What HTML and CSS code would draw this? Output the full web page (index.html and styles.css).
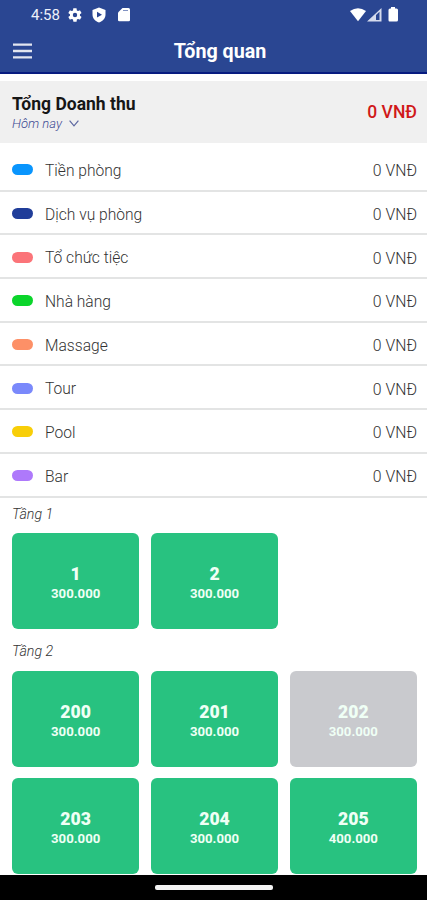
FILE: index.html
```html
<!DOCTYPE html>
<html lang="vi">
<head>
<meta charset="utf-8">
<title>Tổng quan</title>
<link rel="stylesheet" href="styles.css">
</head>
<body>
<div class="screen">
  <header class="header">
    <div class="status">
      <span class="time">4:58</span>
      <svg class="gear" width="16" height="16" viewBox="0 0 24 24"><path fill="#fff" fill-rule="evenodd" d="M19.4 13a7.500 7.500 0 0 0 0-2l2.100-1.600c.2-.2.3-.4.1-.7l-2-3.400c-.1-.3-.4-.3-.6-.2l-2.500 1a7.300 7.300 0 0 0-1.700-1l-.4-2.600c0-.3-.2-.5-.5-.5h-4c-.3 0-.5.2-.5.4L9 5.100c-.6.3-1.200.6-1.700 1l-2.500-1c-.2-.1-.5 0-.6.2l-2 3.400c-.1.300-.1.500.1.700L4.500 11a7.500 7.500 0 0 0 0 2l-2.200 1.600c-.2.200-.2.400-.1.700l2 3.400c.1.300.4.300.6.200l2.500-1c.5.400 1.100.700 1.700 1l.4 2.600c0 .3.200.5.500.5h4c.3 0 .5-.2.500-.4l.4-2.700c.6-.3 1.200-.6 1.700-1l2.500 1c.2.100.5 0 .6-.2l2-3.400c.1-.3.100-.5-.1-.7zM12 15.300a3.300 3.300 0 1 1 0-6.600 3.300 3.300 0 0 1 0 6.600z"/></svg>
      <svg class="shield" width="14" height="16" viewBox="0 0 14 16"><path fill="#fff" fill-rule="evenodd" d="M7 .5 13.500 3v4.500c0 4-2.800 6.800-6.500 8-3.700-1.200-6.500-4-6.500-8V3zM5 4.800v5.800l5-2.900z"/></svg>
      <svg class="card-icon" width="12" height="15" viewBox="0 0 12 15"><path fill="#fff" d="M4.500 1H10.500Q12 1 12 2.500V13Q12 14.300 10.700 14.300H1.300Q0 14.300 0 13V5.500z"/><path stroke="#8293c3" d="M5 3.500h5"/></svg>
      <svg class="signals" width="50" height="16" viewBox="0 0 50 16"><path fill="#fff" d="M0 4Q8-1.500 16 4L8 14.300z"/><path fill="#d5dbed" fill-rule="evenodd" d="M17 14.500 31.500 1v13.500zM26 8v5h3.500V4.800z"/><path fill="#fff" d="M41 1.500V0h4v1.500h1.500Q48 1.500 48 3v10q0 1.500-1.500 1.500h-7Q38.500 14.500 38.500 13V3Q38.500 1.500 40 1.500z"/></svg>
    </div>
    <div class="toolbar">
      <svg class="menu" width="19" height="16" viewBox="0 0 19 16"><path stroke="#e2e5f0" stroke-width="2.300" d="M0 1.700h19M0 8h19M0 14.300h19"/></svg>
      <h1>Tổng quan</h1>
    </div>
  </header>
  <section class="summary">
    <div>
      <h2>Tổng Doanh thu</h2>
      <div class="period"><span>Hôm nay</span><svg width="10" height="7" viewBox="0 0 10 7"><path fill="none" stroke="#5c67a0" stroke-width="1.200" d="M.6.7 5 5.800 9.400.7"/></svg></div>
    </div>
    <strong>0 VNĐ</strong>
  </section>
  <ul class="revenue">
    <li><i class="pill blue"></i><span>Tiền phòng</span><b>0 VNĐ</b></li>
    <li><i class="pill navy"></i><span>Dịch vụ phòng</span><b>0 VNĐ</b></li>
    <li><i class="pill red"></i><span>Tổ chức tiệc</span><b>0 VNĐ</b></li>
    <li><i class="pill green"></i><span>Nhà hàng</span><b>0 VNĐ</b></li>
    <li><i class="pill orange"></i><span>Massage</span><b>0 VNĐ</b></li>
    <li><i class="pill indigo"></i><span>Tour</span><b>0 VNĐ</b></li>
    <li><i class="pill yellow"></i><span>Pool</span><b>0 VNĐ</b></li>
    <li><i class="pill purple"></i><span>Bar</span><b>0 VNĐ</b></li>
  </ul>
  <main class="floors">
    <h3>Tầng 1</h3>
    <div class="rooms">
      <div class="room"><b>1</b><span>300.000</span></div>
      <div class="room"><b>2</b><span>300.000</span></div>
    </div>
    <h3>Tầng 2</h3>
    <div class="rooms">
      <div class="room"><b>200</b><span>300.000</span></div>
      <div class="room"><b>201</b><span>300.000</span></div>
      <div class="room off"><b>202</b><span>300.000</span></div>
      <div class="room"><b>203</b><span>300.000</span></div>
      <div class="room"><b>204</b><span>300.000</span></div>
      <div class="room"><b>205</b><span>400.000</span></div>
    </div>
  </main>
  <footer class="navbar"><i></i></footer>
</div>
</body>
</html>
```
FILE: styles.css
```css
* { box-sizing: border-box; margin: 0; padding: 0; }
body { font-family: Roboto, sans-serif; background: #fff; color: #333; }
.screen { width: 427px; height: 900px; display: flex; flex-direction: column; overflow: hidden; }
.header { height: 74px; flex: none; background: #2a4692; border-bottom: 2px solid #071b80; color: #fff; }
.status { height: 29px; display: flex; align-items: center; padding: 0 27px 0 31px; }
.time { font-size: 15px; width: 36px; white-space: nowrap; color: #eef1fa; }
.shield { margin-left: 9px; }
.card-icon { margin-left: 12px; }
.signals { margin-left: auto; }
.toolbar { height: 44px; display: grid; grid-template-columns: 40px 1fr 27px; align-items: center; }
.menu { margin-left: 13px; }
h1 { font-size: 19.700px; font-weight: 700; text-align: center; line-height: 24px; padding-top: 2px; }
.summary { height: 62px; flex: none; margin-top: 6.500px; background: #f0f0f0; padding: 2px 10px 0 12px; display: flex; align-items: center; justify-content: space-between; }
h2 { font-size: 17.500px; line-height: 22px; font-weight: 700; color: #161616; }
.period { display: flex; align-items: center; gap: 7px; font-size: 13px; line-height: 18px; font-style: italic; font-weight: 300; color: #3d4a92; }
.summary strong { font-size: 17.500px; font-weight: 500; color: #d01919; padding-bottom: 1px; }
.revenue { list-style: none; padding-top: 5.500px; flex: none; }
.revenue li { height: 43.700px; display: flex; align-items: center; padding: 2px 10px 0 12px; border-bottom: 2px solid #e3e4e4; font-size: 15.600px; font-weight: 300; }
.revenue span, .revenue b { padding-top: 2px; }
.revenue b { margin-left: auto; font-weight: 300; font-size: 15.800px; }
.pill { width: 21px; height: 11px; border-radius: 5.500px; margin-right: 12px; }
.blue { background: #0995fd; }
.navy { background: #203d99; }
.red { background: #fb7479; }
.green { background: #0bd52b; }
.orange { background: #fd9067; }
.indigo { background: #7a89fb; }
.yellow { background: #f8ce08; }
.purple { background: #ae79fb; }
.floors { padding: 0 10px 0 12px; flex: none; }
h3 { height: 31px; margin-top: 4.700px; padding-top: 2.500px; font-size: 14.200px; line-height: 19px; font-weight: 300; font-style: italic; }
.rooms { display: grid; grid-template-columns: repeat(3, 1fr); gap: 11.500px; }
.rooms + h3 { margin-top: 11px; padding-top: 2px; }
.room { height: 95.700px; border-radius: 6px; background: #28c280; color: #effff5; display: flex; flex-direction: column; align-items: center; padding-top: 30px; font-weight: 700; }
.room b { font-size: 17.600px; line-height: 23px; }
.room span { font-size: 13.200px; line-height: 16px; }
.off { background: #c9cace; }
.navbar { height: 25px; flex: none; margin-top: auto; background: #000; display: flex; align-items: center; justify-content: center; }
.navbar i { width: 118px; height: 5px; border-radius: 2px; background: #f4f4f4; }
```
